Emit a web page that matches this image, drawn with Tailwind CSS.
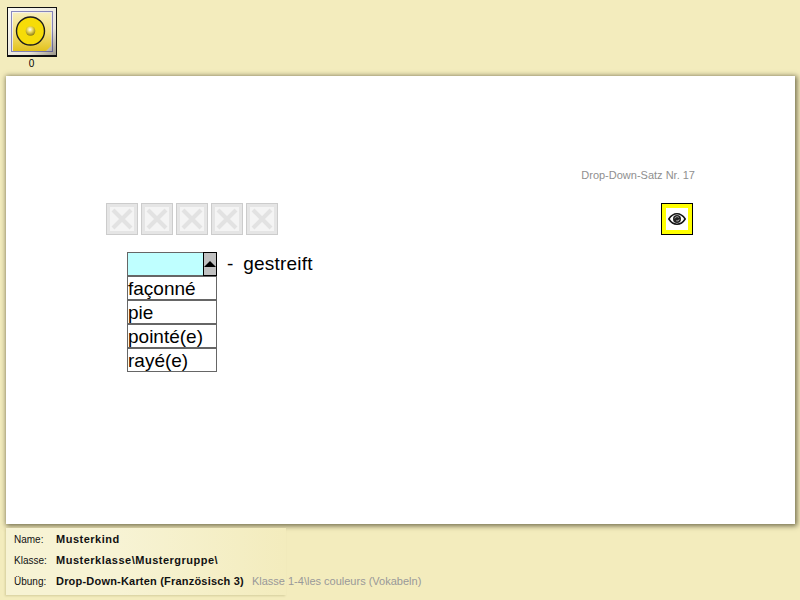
<!DOCTYPE html>
<html lang="en">
<head>
  <meta charset="UTF-8" />
  <title>Drop-Down-Karten</title>
  <script src="https://cdn.jsdelivr.net/npm/@tailwindcss/browser@4"></script>
</head>
<body class="w-[800px] h-[600px] overflow-hidden bg-[#f3ecbd] font-['Liberation_Sans',Arial,sans-serif]">

  <!-- top bar -->
  <div class="h-[76px] pl-[7px] pt-[7px]">
    <div class="w-[50px]">
      <button class="block w-[50px] h-[50px] border border-[#111] border-b-2 bg-[#d8d4c8]">
        <svg width="48" height="47" viewBox="0 0 48 47" class="block">
          <defs>
            <linearGradient id="frame" x1="0" y1="0" x2="1" y2="1">
              <stop offset="0" stop-color="#fbfaf4" />
              <stop offset="0.7" stop-color="#e8e4d6" />
              <stop offset="1" stop-color="#9a968a" />
            </linearGradient>
            <linearGradient id="pad" x1="0" y1="0" x2="0" y2="1">
              <stop offset="0" stop-color="#f7eebc" />
              <stop offset="0.5" stop-color="#f3e07a" />
              <stop offset="1" stop-color="#e3c21c" />
            </linearGradient>
            <radialGradient id="dot" cx="0.45" cy="0.35" r="0.65">
              <stop offset="0" stop-color="#ffffff" />
              <stop offset="0.45" stop-color="#e8d65a" />
              <stop offset="1" stop-color="#8a7a12" />
            </radialGradient>
          </defs>
          <rect x="0" y="0" width="48" height="47" fill="url(#frame)" />
          <path d="M5 5 H43 V38 L38 43 H5 Z" fill="url(#pad)" />
          <rect x="3.5" y="3.5" width="41" height="40" fill="none" stroke="#1c1c90" stroke-dasharray="1 1" />
          <circle cx="22.5" cy="23" r="14" fill="#f6dc08" stroke="#1c1c1c" stroke-width="1.4" />
          <circle cx="22.5" cy="23" r="4.8" fill="url(#dot)" />
        </svg>
      </button>
      <div class="text-center text-[10px] leading-3 text-black mt-[1px] pr-[1px]">0</div>
    </div>
  </div>

  <!-- main card -->
  <div class="ml-[6px] w-[789px] h-[448px] bg-white shadow-[1px_1px_5px_1px_rgba(60,55,30,0.7)] pt-[93px] pl-[100px] pr-[102px]">
    <div class="text-right text-[11px] leading-3 text-[#8f8f8f] mr-[-2px]">Drop-Down-Satz Nr. 17</div>

    <div class="flex justify-between items-start mt-[22px]">
      <div class="flex gap-[3px]">
        <div class="w-[32px] h-[32px] border border-[#cccccc] bg-[#e5e5e5] p-[3px]">
          <svg width="24" height="24" viewBox="0 0 24 24" class="block bg-[#f4f4f4]"><path d="M3 3 L21 21 M21 3 L3 21" stroke="#e2e2e2" stroke-width="4" /></svg>
        </div>
        <div class="w-[32px] h-[32px] border border-[#cccccc] bg-[#e5e5e5] p-[3px]">
          <svg width="24" height="24" viewBox="0 0 24 24" class="block bg-[#f4f4f4]"><path d="M3 3 L21 21 M21 3 L3 21" stroke="#e2e2e2" stroke-width="4" /></svg>
        </div>
        <div class="w-[32px] h-[32px] border border-[#cccccc] bg-[#e5e5e5] p-[3px]">
          <svg width="24" height="24" viewBox="0 0 24 24" class="block bg-[#f4f4f4]"><path d="M3 3 L21 21 M21 3 L3 21" stroke="#e2e2e2" stroke-width="4" /></svg>
        </div>
        <div class="w-[32px] h-[32px] border border-[#cccccc] bg-[#e5e5e5] p-[3px]">
          <svg width="24" height="24" viewBox="0 0 24 24" class="block bg-[#f4f4f4]"><path d="M3 3 L21 21 M21 3 L3 21" stroke="#e2e2e2" stroke-width="4" /></svg>
        </div>
        <div class="w-[32px] h-[32px] border border-[#cccccc] bg-[#e5e5e5] p-[3px]">
          <svg width="24" height="24" viewBox="0 0 24 24" class="block bg-[#f4f4f4]"><path d="M3 3 L21 21 M21 3 L3 21" stroke="#e2e2e2" stroke-width="4" /></svg>
        </div>
      </div>
      <div class="w-[32px] h-[32px] border border-black bg-white shadow-[inset_0_0_0_4px_#ffff00] flex items-center justify-center">
        <svg width="18" height="12" viewBox="0 0 18 12" class="block">
          <path d="M0.8 6 C3.5 1.8 6 0.8 9 0.8 C12 0.8 14.5 1.8 17.2 6 C14.5 10.2 12 11.2 9 11.2 C6 11.2 3.5 10.2 0.8 6 Z" fill="#fff" stroke="#111" stroke-width="1.5" />
          <circle cx="9" cy="6" r="4" fill="#222" />
          <path d="M6.8 5.4 A2.4 2.4 0 0 1 10.8 4.4 M8.2 7.8 A2.2 2.2 0 0 0 11.2 6.4" fill="none" stroke="#ccc" stroke-width="0.8" />
        </svg>
      </div>
    </div>

    <div class="flex items-start ml-[21px] mt-[17px]">
      <div class="w-[90px] border border-[#666] text-[19px] leading-[24px] text-black">
        <div class="h-[24px] bg-[#bfffff] border-b-2 border-[#666] flex justify-end">
          <div class="w-[14px] h-[24px] mt-[-1px] mr-[-1px] border border-black bg-[#c0c0c0] flex items-center justify-center">
            <div class="w-0 h-0 border-x-[6px] border-x-transparent border-b-[6px] border-b-black"></div>
          </div>
        </div>
        <div class="h-[24px] border-b-2 border-[#666]">façonné</div>
        <div class="h-[24px] border-b-2 border-[#666]">pie</div>
        <div class="h-[24px] border-b-2 border-[#666]">pointé(e)</div>
        <div class="h-[22px]">rayé(e)</div>
      </div>
      <div class="ml-[10px] flex gap-[10px] text-[19px] leading-[24px] text-black">
        <span>-</span><span class="tracking-[0.2px]">gestreift</span>
      </div>
    </div>
  </div>

  <!-- footer -->
  <div class="ml-[6px] mt-[4px] w-[280px] h-[67px] pl-[8px] pt-[1px] bg-gradient-to-r from-[#f7f3d4] from-40% to-[#f3ecbd] shadow-[-1px_1px_2px_rgba(120,110,60,0.25)] text-[10px] text-[#111]">
    <div class="flex items-center h-[21px]">
      <span class="w-[42px] shrink-0">Name:</span><span class="font-bold text-[11px] tracking-[0.5px]">Musterkind</span>
    </div>
    <div class="flex items-center h-[21px]">
      <span class="w-[42px] shrink-0">Klasse:</span><span class="font-bold text-[11px] tracking-[0.5px]">Musterklasse\Mustergruppe\</span>
    </div>
    <div class="flex items-center h-[21px] whitespace-nowrap">
      <span class="w-[42px] shrink-0">Übung:</span><span class="font-bold text-[11px] tracking-[0.2px]">Drop-Down-Karten (Französisch 3)</span><span class="ml-[8px] text-[11px] text-[#999]">Klasse 1-4\les couleurs (Vokabeln)</span>
    </div>
  </div>

</body>
</html>
